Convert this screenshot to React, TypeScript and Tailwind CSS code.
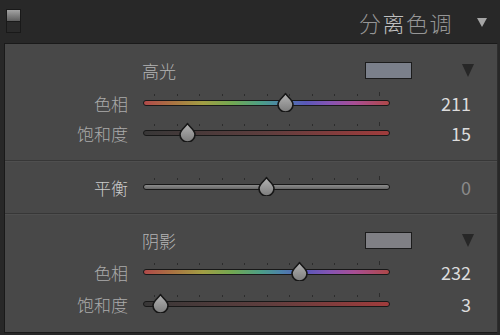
import React from "react";

const FONT = "font-['Noto_Sans_CJK_SC','Noto_Sans',sans-serif] font-light";

const HUE_BG =
  "linear-gradient(to right, #b04a4a 0%, #aa7442 12%, #a29e44 24%, #72a852 36%, #4c9e88 48%, #4c82aa 56%, #5a58b8 66%, #8654b2 76%, #a84e94 86%, #ae4848 100%)";
const SAT_BG = "linear-gradient(to right, #383737 0%, #5e3e3e 50%, #a03c3c 100%)";
const BAL_BG = "linear-gradient(to bottom, #8c8c8c 0%, #7a7a7a 50%, #666 100%)";

function Thumb({ left }: { left: number }) {
  return (
    <svg
      width="19"
      height="20"
      viewBox="0 0 19 20"
      className="absolute top-[4px]"
      style={{ left: left - 9.5 }}
    >
      <defs>
        <linearGradient id="tg" x1="0" y1="0" x2="0" y2="1">
          <stop offset="0" stopColor="#b4b4b4" />
          <stop offset="1" stopColor="#7c7c7c" />
        </linearGradient>
      </defs>
      <path
        d="M9.5 1.5 C11 4.5 17 8 17 12.5 A7.5 7.5 0 0 1 2 12.5 C2 8 8 4.5 9.5 1.5 Z"
        fill="url(#tg)"
        stroke="#161616"
        strokeWidth="1.6"
        strokeLinejoin="round"
      />
    </svg>
  );
}

function Slider({ frac, bg }: { frac: number; bg: string }) {
  const ticks = Array.from({ length: 11 }, (_, i) => i);
  return (
    <div className="relative w-[247px] h-[30px] shrink-0">
      {ticks.map((i) => (
        <div
          key={i}
          className="absolute w-[1px] bg-[#2c2c2c]"
          style={{
            left: 11 + i * 22.5,
            top: i === 10 ? 4 : 6,
            height: i === 10 ? 4 : 2,
          }}
        />
      ))}
      <div
        className="absolute left-0 right-0 top-[12px] h-[6px] rounded-[3px] border border-[#181818]"
        style={{ background: bg }}
      />
      <Thumb left={11 + frac * 225} />
    </div>
  );
}

function Row({
  label,
  value,
  frac,
  bg,
  dim,
  labelClass,
}: {
  label: string;
  value: string;
  frac: number;
  bg: string;
  dim?: boolean;
  labelClass?: string;
}) {
  return (
    <div className="flex items-center h-[30px]">
      <div className={`w-[123px] text-right text-[17px] leading-none ${labelClass ?? "text-[#ababab]"}`}>
        {label}
      </div>
      <div className="w-[15px]" />
      <Slider frac={frac} bg={bg} />
      <div
        className={`w-[81px] text-right text-[18px] leading-none font-normal ${dim ? "text-[#8a8a8a]" : "text-[#dcdcdc]"}`}
      >
        {value}
      </div>
    </div>
  );
}

function Header({ label, swatch }: { label: string; swatch: string }) {
  return (
    <div className="flex items-center h-[30px]">
      <div className="w-[137px]" />
      <div className="flex-1 text-[17px] leading-none text-[#b4b4b4]">{label}</div>
      <div className="w-[47px] h-[17px] border border-[#1c1c1c]" style={{ background: swatch }} />
      <div className="w-[50px]" />
      <svg width="12" height="13" viewBox="0 0 12 13">
        <polygon points="0,0 12,0 6,13" fill="#272727" />
      </svg>
      <div className="w-[23px]" />
    </div>
  );
}

function Divider() {
  return (
    <div>
      <div className="h-[1px] bg-[#373737]" />
      <div className="h-[1px] bg-[#4f4f4f]" />
    </div>
  );
}

export default function App() {
  return (
    <div className={`w-[500px] h-[335px] bg-[#282828] ${FONT} overflow-hidden`}>
      {/* top bar */}
      <div className="flex items-start h-[43px]">
        <div className="ml-[6px] mt-[9px] w-[15px] h-[24px] border border-[#191919] bg-[#2a2a2a] flex flex-col">
          <div className="h-[11px] bg-gradient-to-b from-[#a4a4a4] to-[#5e5e5e]" />
          <div className="h-[1px] bg-[#1a1a1a]" />
        </div>
        <div className="flex-1" />
        <div className="mt-[11px] text-[22px] leading-none tracking-[1.5px] text-[#969696]">
          分<span className="text-[#c0c0c0]">离</span>色调
        </div>
        <svg width="10" height="9" viewBox="0 0 10 9" className="ml-[24px] mt-[18px]">
          <polygon points="0,0 10,0 5,9" fill="#a6a6a6" />
        </svg>
        <div className="w-[13px]" />
      </div>
      {/* panel */}
      <div className="ml-[4px] w-[494px] h-[290px] border border-[#1a1a1a] border-r-[#2e2e2e] bg-[#484848]">
        <div className="pt-[11px] pb-[12px]">
          <Header label="高光" swatch="#7b808b" />
          <div className="h-[3px]" />
          <Row label="色相" value="211" frac={211 / 360} bg={HUE_BG} />
          <Row label="饱和度" value="15" frac={0.15} bg={SAT_BG} />
        </div>
        <Divider />
        <div className="pt-[10px] pb-[11px]">
          <Row label="平衡" value="0" frac={0.5} bg={BAL_BG} dim labelClass="text-[#cccccc]" />
        </div>
        <Divider />
        <div className="pt-[10px]">
          <Header label="阴影" swatch="#808085" />
          <div className="h-[2px]" />
          <Row label="色相" value="232" frac={232 / 360} bg={HUE_BG} />
          <div className="h-[2px]" />
          <Row label="饱和度" value="3" frac={0.03} bg={SAT_BG} />
        </div>
      </div>
    </div>
  );
}
